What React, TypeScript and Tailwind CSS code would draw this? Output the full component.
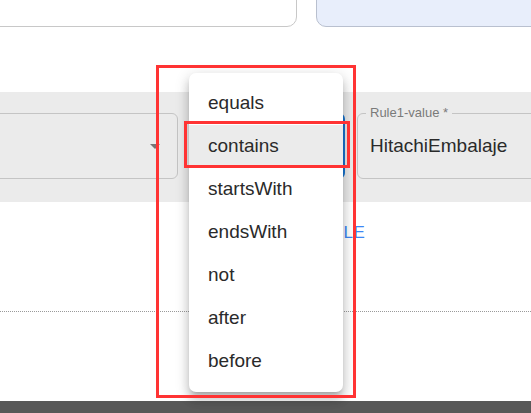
import React from 'react';

const operators = ['equals', 'contains', 'startsWith', 'endsWith', 'not', 'after', 'before'];

const ArrowDown = () => (
  <svg width="24" height="24" viewBox="0 0 24 24" className="text-[#757575]">
    <path d="M7 10l5 5 5-5z" fill="currentColor" />
  </svg>
);

const OperatorMenu = ({ selected }: { selected: string }) => (
  <div className="absolute left-[189px] top-[73px] w-[154px] py-[9px] bg-white rounded-[7px] shadow-[0px_5px_5px_-3px_rgba(0,0,0,0.2),0px_8px_10px_1px_rgba(0,0,0,0.14),0px_3px_14px_2px_rgba(0,0,0,0.12)]">
    {operators.map((op) => (
      <div
        key={op}
        className={
          'h-[43px] pl-[19px] flex items-center text-[19px] text-[#2a2a2a] ' +
          (op === selected ? 'bg-[#ebebeb]' : '')
        }
      >
        {op}
      </div>
    ))}
  </div>
);

export default function App() {
  return (
    <div className="relative w-[531px] h-[413px] overflow-hidden bg-white font-['Liberation_Sans',Arial,sans-serif]">
      {/* cards cut off at top */}
      <div className="flex items-end gap-[19px] h-[27px] overflow-hidden">
        <div className="-ml-[20px] w-[317px] h-[80px] shrink-0 bg-white border border-[#c8c8c8] rounded-[10px]" />
        <div className="flex-1 -mr-[20px] h-[80px] bg-[#e8eefb] border border-[#b9c0cf] rounded-[10px]" />
      </div>

      {/* rule row */}
      <div className="mt-[65px] h-[110px] bg-[#ebebeb] pt-[21px] flex">
        <div className="-ml-[20px] w-[198px] h-[66px] shrink-0 border border-[#c4c4c4] rounded-[6px] flex items-center justify-end pr-[10px]">
          <ArrowDown />
        </div>
        <div className="ml-[12px] w-[155px] h-[66px] shrink-0 border-2 border-[#1976d2] rounded-[6px]" />
        <div className="relative ml-[12px] w-[230px] h-[66px] shrink-0 border border-[#c4c4c4] rounded-[6px] flex items-center pl-[12px]">
          <span className="absolute -top-[10px] left-[8px] px-[4px] bg-[#ebebeb] text-[13px] leading-[18px] text-[#7a7a7a]">
            Rule1-value *
          </span>
          <span className="text-[19px] text-[#2a2a2a]">HitachiEmbalaje</span>
        </div>
      </div>

      <div className="mt-[19px] pl-[276px] h-[24px] leading-[24px] text-[17px] tracking-[0.4px] text-[#3d87f5]">
        ADD RULE
      </div>

      <div className="mt-[66px] border-t border-dotted border-[#9a9a9a]" />

      <div className="mt-[89px] h-[12px] bg-[#585858]" />

      <OperatorMenu selected="contains" />

      {/* annotation boxes */}
      <div className="absolute left-[156px] top-[65px] w-[200px] h-[333px] border-[3px] border-[#ff3333]" />
      <div className="absolute left-[184px] top-[121px] w-[166px] h-[47px] border-[3px] border-[#ff3333]" />
    </div>
  );
}
